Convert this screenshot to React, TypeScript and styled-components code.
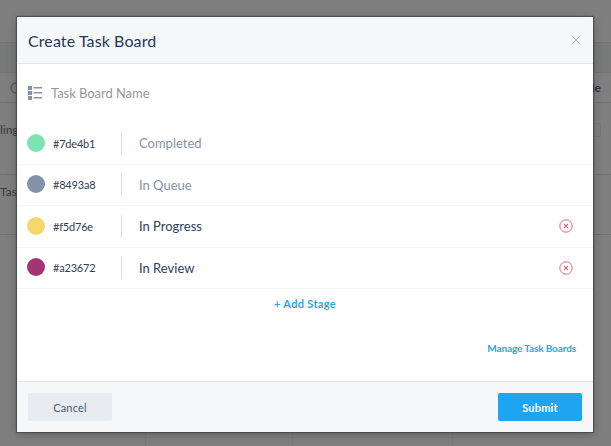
import React from "react";
import styled, { createGlobalStyle } from "styled-components";

const Global = createGlobalStyle`
  html, body { margin: 0; padding: 0; width: 611px; height: 446px; overflow: hidden; background: #7f7f7f; }
  * { box-sizing: border-box; }
  body { font-family: "Lato", "Noto Sans", sans-serif; }
`;

const Page = styled.div`
  position: relative;
  width: 611px;
  height: 446px;
  background: #7f7f7f;
  overflow: hidden;
  color: #3c3c3c;
`;

const BackRow = styled.div<{ $h: number; $pb?: number }>`
  height: ${(p) => p.$h}px;
  border-bottom: 1px solid #727272;
  display: flex;
  align-items: center;
  justify-content: space-between;
  font-size: 12px;
  padding: 0 10px ${(p) => p.$pb ?? 0}px 0;
  color: #3a3a3a;
`;

const BackBand = styled(BackRow)`
  background: #787a7a;
`;

const BackSearch = styled.span`
  display: flex;
  padding-left: 10px;
  color: #5c5c5c;
`;

const BackLabel = styled.span`
  font-weight: 700;
  color: #333;
`;

const BackCheck = styled.span`
  width: 12px;
  height: 14px;
  border: 1px solid #777;
  border-radius: 2px;
`;

const BackColumns = styled.div`
  display: flex;
  height: 212px;
`;

const BackColumn = styled.div<{ $w: number }>`
  width: ${(p) => p.$w}px;
  flex: none;
  border-right: 1px solid #7a7a7a;
`;

const Dialog = styled.div`
  position: absolute;
  left: 17px;
  top: 17px;
  width: 576px;
  height: 415px;
  background: #fff;
  display: flex;
  flex-direction: column;
  box-shadow: 0 0 1px 1px rgba(50, 50, 50, 0.55), 0 2px 10px rgba(0, 0, 0, 0.25);
`;

const Header = styled.header`
  height: 47px;
  flex: none;
  display: flex;
  align-items: center;
  justify-content: space-between;
  padding: 0 12px 0 11px;
  background: #f5f7f9;
  border-bottom: 1px solid #e1e5ea;
`;

const Title = styled.h2`
  margin: 0;
  font-size: 16px;
  font-weight: 400;
  letter-spacing: 0.1px;
  color: #253858;
`;

const Close = styled.button`
  border: 0;
  padding: 0;
  background: none;
  width: 10px;
  height: 10px;
  display: flex;
  color: #c4c7cc;
`;

const NameRow = styled.div`
  height: 59px;
  flex: none;
  display: flex;
  align-items: center;
  gap: 9px;
  padding: 0 11px 2px;
  font-size: 13px;
  letter-spacing: -0.05px;
  color: #94979e;
`;

const Stages = styled.div`
  display: flex;
  flex-direction: column;
`;

const Stage = styled.div<{ $h: number }>`
  height: ${(p) => p.$h}px;
  display: flex;
  align-items: center;
  padding: 0 20px 1px 10px;
  border-bottom: 1px solid #f5f6f8;
`;

const Swatch = styled.span<{ $c: string }>`
  width: 18px;
  height: 18px;
  flex: none;
  margin-bottom: 1px;
  border-radius: 50%;
  background: ${(p) => p.$c};
`;

const Hex = styled.span`
  width: 76px;
  flex: none;
  padding-left: 8px;
  font-size: 11px;
  letter-spacing: -0.2px;
  color: #2f3d55;
`;

const Divider = styled.span`
  width: 1px;
  height: 23px;
  flex: none;
  background: #d8dbe0;
  margin-right: 17px;
`;

const StageName = styled.span<{ $muted: boolean }>`
  flex: 1;
  font-size: 13px;
  letter-spacing: 0;
  color: ${(p) => (p.$muted ? "#8493a8" : "#2c3e5c")};
`;

const Remove = styled.button`
  border: 0;
  padding: 0;
  background: none;
  width: 14px;
  height: 14px;
  display: flex;
  color: #e8687f;
`;

const AddStage = styled.a`
  flex: none;
  height: 28px;
  display: flex;
  align-items: center;
  justify-content: center;
  font-size: 11px;
  font-weight: 700;
  letter-spacing: 0.33px;
  color: #2ea3e6;
`;

const Spacer = styled.div`
  flex: 1;
  display: flex;
  align-items: flex-end;
  justify-content: flex-end;
  padding: 0 17px 27px 0;
`;

const Manage = styled.a`
  font-size: 10px;
  font-weight: 700;
  letter-spacing: -0.12px;
  color: #2ea3e6;
`;

const Footer = styled.footer`
  height: 51px;
  flex: none;
  display: flex;
  align-items: center;
  justify-content: space-between;
  padding: 0 11px;
  background: #f5f7f9;
  border-top: 1px solid #e1e5ea;
`;

const Button = styled.button<{ $primary?: boolean }>`
  width: 84px;
  height: 28px;
  border: 0;
  border-radius: 2px;
  font-family: inherit;
  font-size: 11px;
  font-weight: ${(p) => (p.$primary ? 700 : 400)};
  letter-spacing: 0.2px;
  color: ${(p) => (p.$primary ? "#fff" : "#4a5a72")};
  background: ${(p) => (p.$primary ? "#1ea5f2" : "#e8ebef")};
`;

const stages = [
  { hex: "#7de4b1", name: "Completed", muted: true, h: 42, removable: false },
  { hex: "#8493a8", name: "In Queue", muted: true, h: 41, removable: false },
  { hex: "#f5d76e", name: "In Progress", muted: false, h: 42, removable: true },
  { hex: "#a23672", name: "In Review", muted: false, h: 41, removable: true },
];

export default function App() {
  return (
    <Page>
      <Global />
      <BackRow $h={43} />
      <BackBand $h={30} />
      <BackRow $h={30}>
        <BackSearch>
          <svg width="12" height="12" viewBox="0 0 12 12" fill="none" stroke="currentColor" strokeWidth="1.5">
            <circle cx="6" cy="6" r="5" />
          </svg>
        </BackSearch>
        <BackLabel>le</BackLabel>
      </BackRow>
      <BackRow $h={72} $pb={18}>
        <span>ling</span>
        <BackCheck />
      </BackRow>
      <BackRow $h={60} $pb={26}>
        <span>Tas</span>
      </BackRow>
      <BackColumns>
        <BackColumn $w={146} />
        <BackColumn $w={147} />
        <BackColumn $w={160} />
      </BackColumns>
      <Dialog>
        <Header>
          <Title>Create Task Board</Title>
          <Close aria-label="Close">
            <svg width="10" height="10" viewBox="0 0 10 10" fill="none" stroke="currentColor" strokeWidth="1">
              <path d="M.8.8l8.4 8.4M9.2.8L.8 9.2" />
            </svg>
          </Close>
        </Header>
        <NameRow>
          <svg width="14" height="14" viewBox="0 0 14 14" fill="#8493a8">
            <path d="M0 0h4v4H0zM0 5h4v4H0zM0 10h4v4H0zM5.5 1h8.5v1.5H5.5zM5.5 6h8.5v1.5H5.5zM5.5 11h8.5v1.5H5.5z" />
          </svg>
          Task Board Name
        </NameRow>
        <Stages>
          {stages.map((s) => (
            <Stage key={s.hex} $h={s.h}>
              <Swatch $c={s.hex} />
              <Hex>{s.hex}</Hex>
              <Divider />
              <StageName $muted={s.muted}>{s.name}</StageName>
              {s.removable && (
                <Remove aria-label="Remove">
                  <svg width="14" height="14" viewBox="0 0 14 14" fill="none" stroke="currentColor">
                    <circle cx="7" cy="7" r="6.2" strokeWidth="1" />
                    <path d="M5 5l4 4M9 5l-4 4" strokeWidth="1.1" />
                  </svg>
                </Remove>
              )}
            </Stage>
          ))}
        </Stages>
        <AddStage>+ Add Stage</AddStage>
        <Spacer>
          <Manage>Manage Task Boards</Manage>
        </Spacer>
        <Footer>
          <Button>Cancel</Button>
          <Button $primary>Submit</Button>
        </Footer>
      </Dialog>
    </Page>
  );
}
